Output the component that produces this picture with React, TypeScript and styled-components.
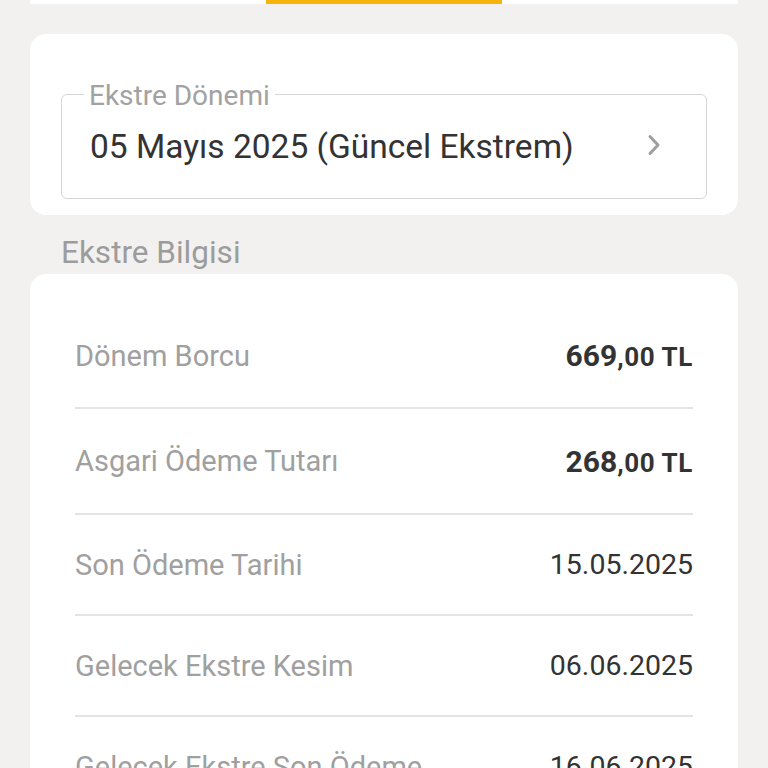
import React from "react";
import styled, { createGlobalStyle } from "styled-components";

const Global = createGlobalStyle`
  html, body { margin: 0; padding: 0; background: #f2f1ef; }
  body { font-family: Roboto, "Noto Sans", sans-serif; -webkit-font-smoothing: antialiased; }
  * { box-sizing: border-box; }
`;

const Page = styled.div`
  padding: 0 30px;
  height: 768px;
  overflow: hidden;
`;

const TabBar = styled.div`
  display: flex;
  height: 4px;
  background: #ffffff;
`;

const Tab = styled.div<{ $active?: boolean }>`
  flex: 1;
  background: ${(p) => (p.$active ? "#f6b30c" : "transparent")};
`;

const Card = styled.div`
  background: #ffffff;
  border-radius: 16px;
`;

const PeriodCard = styled(Card)`
  margin-top: 30px;
  padding: 42px 31px 16px;
`;

const Field = styled.fieldset`
  margin: 0;
  border: 1.5px solid #d6d6d6;
  border-radius: 6px;
  padding: 0 44px 0 22px;
  height: 123px;
  display: flex;
  align-items: center;
  justify-content: space-between;
`;

const Legend = styled.legend`
  padding: 4px 5px 0;
  font-size: 28px;
  line-height: 32px;
  color: #a2a2a2;
`;

const FieldValue = styled.div`
  margin: -17px 0 0 6px;
  font-size: 33.5px;
  color: #333333;
`;

const Chevron = styled.svg`
  width: 16px;
  height: 24px;
  margin-top: -20px;
`;

const SectionTitle = styled.div`
  padding: 18px 31px 0;
  font-size: 31.5px;
  line-height: 40px;
  color: #9c9c9c;
  margin-bottom: 1px;
`;

const InfoCard = styled(Card)`
  padding: 30px 45px 0;
  min-height: 600px;
`;

const Row = styled.div<{ $h: number }>`
  display: flex;
  align-items: center;
  justify-content: space-between;
  height: ${(p) => p.$h}px;
  border-bottom: 2px solid #e4e4e4;
`;

const Label = styled.span`
  font-size: 29px;
  color: #a0a0a0;
`;

const Value = styled.span`
  font-size: 28.5px;
  color: #333333;
`;

const Amount = styled.span`
  font-weight: 700;
  color: #333333;
  font-size: 30px;
`;

const Small = styled.span`
  font-size: 26px;
  letter-spacing: 0.6px;
`;

export default function App() {
  const rows: { label: string; value: React.ReactNode; h: number }[] = [
    {
      label: "Dönem Borcu",
      value: (
        <Amount>
          669<Small>,00 TL</Small>
        </Amount>
      ),
      h: 105,
    },
    {
      label: "Asgari Ödeme Tutarı",
      value: (
        <Amount>
          268<Small>,00 TL</Small>
        </Amount>
      ),
      h: 106,
    },
    { label: "Son Ödeme Tarihi", value: <Value>15.05.2025</Value>, h: 101 },
    { label: "Gelecek Ekstre Kesim", value: <Value>06.06.2025</Value>, h: 101 },
    { label: "Gelecek Ekstre Son Ödeme", value: <Value>16.06.2025</Value>, h: 101 },
  ];
  return (
    <>
      <Global />
      <Page>
        <TabBar>
          <Tab />
          <Tab $active />
          <Tab />
        </TabBar>
        <PeriodCard>
          <Field>
            <Legend>Ekstre Dönemi</Legend>
            <FieldValue>05 Mayıs 2025 (Güncel Ekstrem)</FieldValue>
            <Chevron viewBox="0 0 16 24">
              <path d="M4 3.5l8 8.5-8 8.5" fill="none" stroke="#9e9e9e" strokeWidth="3" strokeLinecap="round" strokeLinejoin="round" />
            </Chevron>
          </Field>
        </PeriodCard>
        <SectionTitle>Ekstre Bilgisi</SectionTitle>
        <InfoCard>
          {rows.map((r) => (
            <Row key={r.label} $h={r.h}>
              <Label>{r.label}</Label>
              {r.value}
            </Row>
          ))}
        </InfoCard>
      </Page>
    </>
  );
}
